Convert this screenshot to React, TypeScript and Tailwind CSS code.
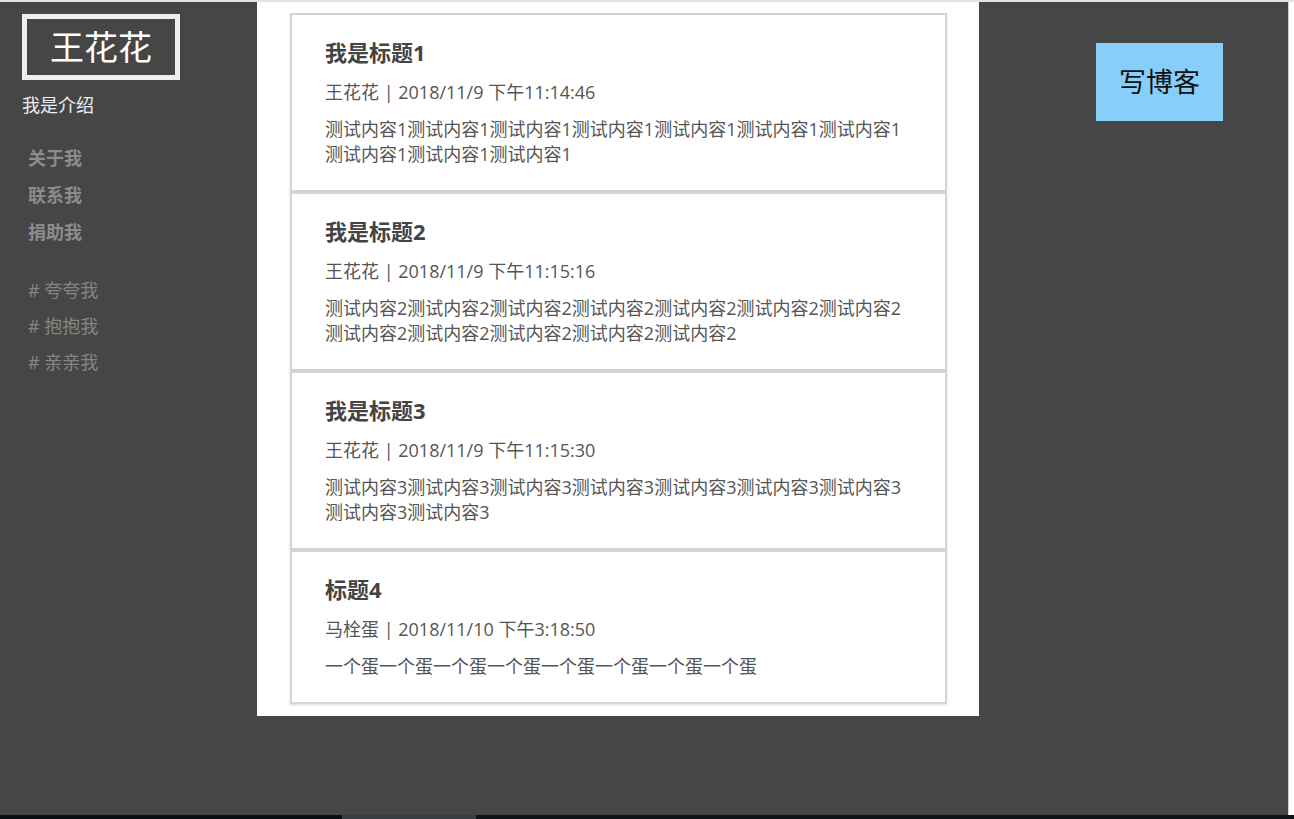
const posts = [
  { title: "我是标题1", author: "王花花", time: "2018/11/9 下午11:14:46", content: "测试内容1测试内容1测试内容1测试内容1测试内容1测试内容1测试内容1测试内容1测试内容1测试内容1" },
  { title: "我是标题2", author: "王花花", time: "2018/11/9 下午11:15:16", content: "测试内容2测试内容2测试内容2测试内容2测试内容2测试内容2测试内容2测试内容2测试内容2测试内容2测试内容2测试内容2" },
  { title: "我是标题3", author: "王花花", time: "2018/11/9 下午11:15:30", content: "测试内容3测试内容3测试内容3测试内容3测试内容3测试内容3测试内容3测试内容3测试内容3" },
  { title: "标题4", author: "马栓蛋", time: "2018/11/10 下午3:18:50", content: "一个蛋一个蛋一个蛋一个蛋一个蛋一个蛋一个蛋一个蛋" },
];

const links = ["关于我", "联系我", "捐助我"];
const tags = ["夸夸我", "抱抱我", "亲亲我"];

export default function App() {
  return (
    <div className="w-[1294px] h-[819px] flex flex-col bg-[#464646] font-['Open_Sans','Noto_Sans_CJK_SC',sans-serif] overflow-hidden">
      <div className="h-[2px] bg-[#e2e2e2]" />
      <div className="flex flex-1 min-h-0">
        {/* sidebar */}
        <aside className="w-[257px] shrink-0 pl-[22px] pt-[12px]">
          <div className="w-[158px] h-[66px] border-[5px] border-[#eeeeee] flex items-center justify-center text-[34px] text-white leading-none">
            王花花
          </div>
          <div className="mt-[13px] text-[18px] leading-[25px] text-[#eeeeee]">我是介绍</div>
          <nav className="mt-[28px] pl-[6px] flex flex-col gap-[12px]">
            {links.map((l) => (
              <a key={l} className="text-[18px] leading-[25px] font-bold text-[#8c8c8c]">{l}</a>
            ))}
          </nav>
          <div className="mt-[33px] pl-[6px] flex flex-col gap-[11px]">
            {tags.map((t) => (
              <a key={t} className="text-[18px] leading-[25px] text-[#858585]"># {t}</a>
            ))}
          </div>
        </aside>

        {/* posts */}
        <main className="w-[722px] shrink-0 self-start bg-white pt-[11px] pb-[12px] pl-[33px] pr-[32px]">
          {posts.map((p) => (
            <div key={p.title} className="border-2 border-[#d4d4d4] shadow-[0_1px_2px_rgba(0,0,0,0.15)] pt-[22px] px-[33px] pb-[23px]">
              <h2 className="text-[22px] leading-[30px] font-bold text-[#444444]">{p.title}</h2>
              <div className="mt-[13px] text-[18px] leading-[25px] text-[#555555]">{p.author} | {p.time}</div>
              <p className="mt-[12px] text-[18px] leading-[25px] text-[#555555] break-all">{p.content}</p>
            </div>
          ))}
        </main>

        {/* right */}
        <div className="flex-1 pl-[117px] pt-[41px]">
          <button className="w-[127px] h-[78px] bg-[#87cefa] text-[27px] text-[#111111] flex items-center justify-center">
            写博客
          </button>
        </div>
        <div className="w-[6px] bg-white border-l border-[#d0d0d0]" />
      </div>
      <div className="h-[4px] flex">
        <div className="w-[342px] bg-[#0b0f14]" />
        <div className="w-[134px] bg-[#3a3d42]" />
        <div className="flex-1 bg-[#0f1419]" />
      </div>
    </div>
  );
}
